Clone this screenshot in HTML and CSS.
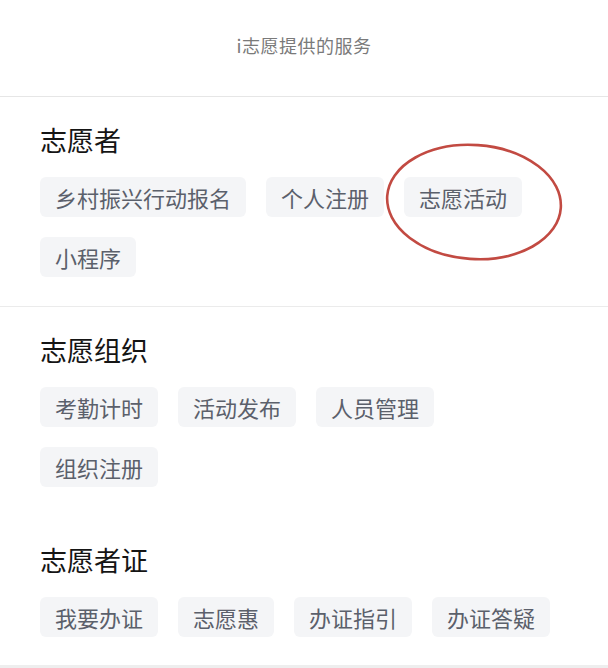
FILE: index.html
```html
<!DOCTYPE html>
<html lang="zh-CN">
<head>
  <meta charset="UTF-8" />
  <meta name="viewport" content="width=device-width, initial-scale=1.0"/>
  <title>i志愿提供的服务</title>
  <link rel="stylesheet" href="styles.css">
</head>
<body>

<div class="sheet">
  <header class="sheet-header">i志愿提供的服务</header>

  <section class="group group-first">
    <h3>志愿者</h3>
    <div class="chips">
      <span class="chip">乡村振兴行动报名</span>
      <span class="chip">个人注册</span>
      <span class="chip">志愿活动</span>
      <span class="chip">小程序</span>
    </div>
    <!-- 红圈标注 -->
    <svg class="mark" viewBox="0 0 180 120" xmlns="http://www.w3.org/2000/svg">
      <ellipse cx="90" cy="60" rx="87" ry="57" transform="rotate(4 90 60)"/>
    </svg>
  </section>

  <section class="group group-mid">
    <h3>志愿组织</h3>
    <div class="chips">
      <span class="chip">考勤计时</span>
      <span class="chip">活动发布</span>
      <span class="chip">人员管理</span>
      <span class="chip">组织注册</span>
    </div>
  </section>

  <section class="group group-last">
    <h3>志愿者证</h3>
    <div class="chips">
      <span class="chip">我要办证</span>
      <span class="chip">志愿惠</span>
      <span class="chip">办证指引</span>
      <span class="chip">办证答疑</span>
    </div>
  </section>
</div>

</body>
</html>
```

FILE: styles.css
```css
* { box-sizing: border-box; }

body {
  margin: 0;
  background: #fff;
  font-family: "Noto Sans CJK SC", "Noto Sans", sans-serif;
}

.sheet {
  width: 608px;
  height: 668px;
  overflow: hidden;
  background: #fff;
  border-bottom: 3px solid #eeeeee;
}

.sheet-header {
  padding: 31px 0 37px;
  line-height: 28px;
  font-size: 18px;
  letter-spacing: 0.5px;
  color: #7a7a7a;
  text-align: center;
  border-bottom: 1px solid #e6e6e6;
}

.group {
  position: relative;
  padding: 25px 40px 29px 40px;
}

.group-first {
  border-bottom: 1px solid #ebebeb;
}

.group-mid {
  padding-bottom: 28px;
}

.group-last {
  padding-top: 27px;
}

.group h3 {
  margin: 0 0 19px;
  font-size: 27px;
  line-height: 36px;
  font-weight: 400;
  color: #151515;
}

.chips {
  display: flex;
  flex-wrap: wrap;
  gap: 20px;
}

.chip {
  height: 40px;
  line-height: 40px;
  padding: 0 15px;
  font-size: 22px;
  color: #5b606b;
  background: #f4f5f7;
  border-radius: 6px;
}

.mark {
  position: absolute;
  left: 384px;
  top: 45px;
  width: 180px;
  height: 120px;
  overflow: visible;
}

.mark ellipse {
  fill: none;
  stroke: #c24a42;
  stroke-width: 2.6;
}
```
